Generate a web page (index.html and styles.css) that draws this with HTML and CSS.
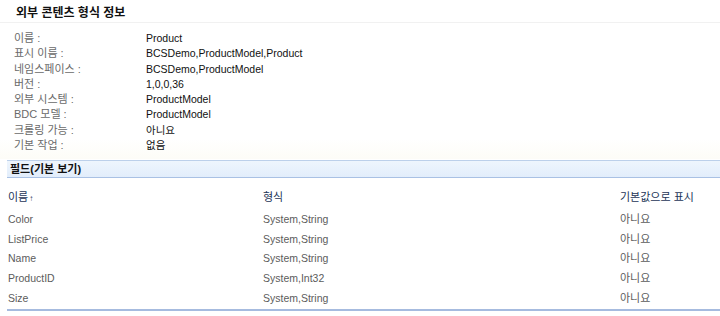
FILE: index.html
```html
<!DOCTYPE html>
<html lang="ko">
<head>
<meta charset="utf-8">
<link rel="stylesheet" href="styles.css">
</head>
<body>
<div class="page">
  <div class="title">외부 콘텐츠 형식 정보</div>
  <div class="props">
    <div class="lbl">이름 :</div><div class="val">Product</div>
    <div class="lbl">표시 이름 :</div><div class="val">BCSDemo,ProductModel,Product</div>
    <div class="lbl">네임스페이스 :</div><div class="val">BCSDemo,ProductModel</div>
    <div class="lbl">버전 :</div><div class="val">1,0,0,36</div>
    <div class="lbl">외부 시스템 :</div><div class="val">ProductModel</div>
    <div class="lbl">BDC 모델 :</div><div class="val">ProductModel</div>
    <div class="lbl">크롤링 가능 :</div><div class="val">아니요</div>
    <div class="lbl">기본 작업 :</div><div class="val">없음</div>
  </div>
  <div class="section">필드(기본 보기)</div>
  <div class="grid">
    <div class="hd">이름<span class="arrow">↑</span></div><div class="hd">형식</div><div class="hd">기본값으로 표시</div>
    <div class="cell">Color</div><div class="cell">System,String</div><div class="cell">아니요</div>
    <div class="cell">ListPrice</div><div class="cell">System,String</div><div class="cell">아니요</div>
    <div class="cell">Name</div><div class="cell">System,String</div><div class="cell">아니요</div>
    <div class="cell">ProductID</div><div class="cell">System,Int32</div><div class="cell">아니요</div>
    <div class="cell">Size</div><div class="cell">System,String</div><div class="cell">아니요</div>
  </div>
</div>
</body>
</html>
```
FILE: styles.css
```css
html, body {
  margin: 0;
  padding: 0;
  background: #ffffff;
}
.page {
  width: 720px;
  height: 316px;
  overflow: hidden;
  font-family: "Liberation Sans", "Noto Sans CJK KR", sans-serif;
  font-size: 10.5px;
  color: #000;
}
.title {
  height: 22px;
  line-height: 27px;
  padding-left: 16px;
  font-weight: bold;
  font-size: 12px;
  color: #111;
  border-bottom: 1px solid #f1f1f1;
}
.props {
  display: grid;
  grid-template-columns: 132px auto;
  grid-auto-rows: 15.3px;
  padding: 8px 0 0 14px;
  line-height: 15.3px;
  height: 128px;
  background: linear-gradient(#ffffff 85%, #fdfcf7 100%);
}
.lbl {
  color: #6a6a6a;
  font-size: 11px;
}
.val {
  color: #111;
}
.section {
  margin-left: 7px;
  height: 16px;
  line-height: 16px;
  padding-left: 3px;
  font-weight: bold;
  font-size: 11px;
  color: #111;
  background: linear-gradient(#eef5fd, #e2edfb);
  border-top: 1px solid #bcd0ea;
  border-bottom: 1px solid #a9c1e4;
  margin-top: 1px;
}
.grid {
  display: grid;
  grid-template-columns: 255px 357px auto;
  grid-template-rows: 32px repeat(5, 19.7px);
  margin-left: 7px;
  padding-left: 1px;
  border-bottom: 2px solid #a6bbdf;
  padding-bottom: 1px;
}
.hd {
  padding-top: 9px;
  line-height: 20px;
  color: #1d3557;
  font-size: 11px;
}
.arrow {
  font-size: 8px;
  margin-left: 1px;
}
.cell {
  line-height: 19.7px;
  color: #5c5c5c;
}
.cell:nth-child(3n) {
  font-size: 11px;
}
```
